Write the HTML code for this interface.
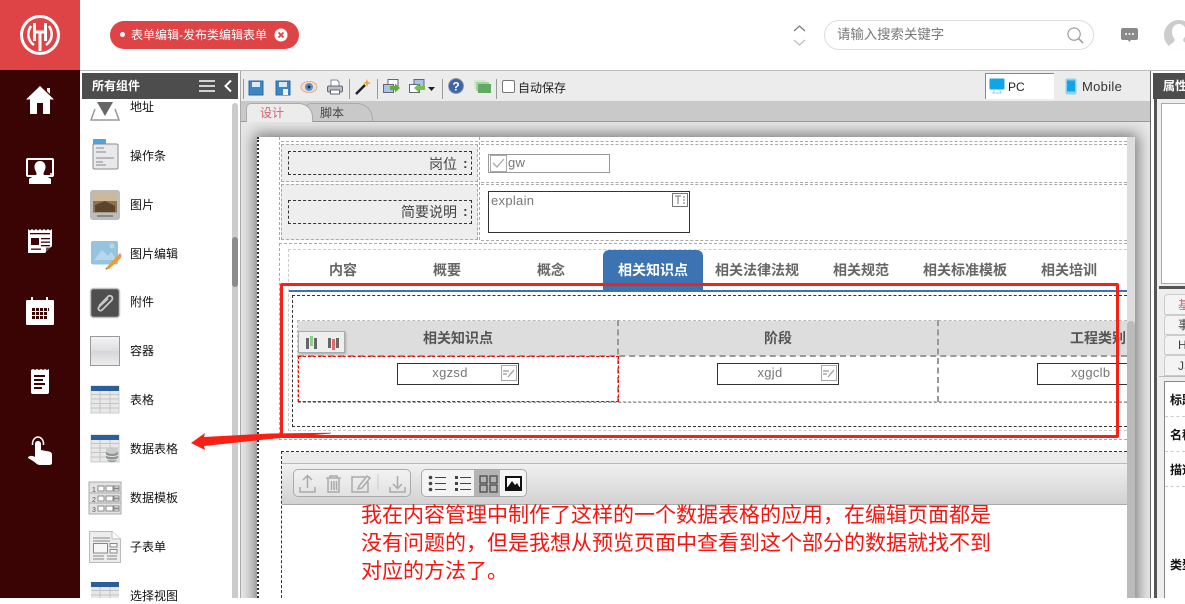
<!DOCTYPE html>
<html lang="zh"><head><meta charset="utf-8"><title>表单编辑</title>
<style>
*{box-sizing:border-box}
html,body{margin:0;padding:0}
body{width:1185px;height:598px;overflow:hidden;position:relative;background:#fff;font-family:"Liberation Sans","Noto Sans CJK SC",sans-serif;font-size:12px;color:#333}
.a{position:absolute}
.t{position:absolute;white-space:nowrap;line-height:16px}
svg{position:absolute;overflow:visible}
.item{position:absolute;left:130px;font-size:12px;color:#111;line-height:16px;white-space:nowrap}
.tab{position:absolute;top:262px;font-size:14px;font-weight:bold;color:#666;line-height:16px;white-space:nowrap}
.dash{position:absolute;border:1px dashed #aaa}
.dk{position:absolute;border:1px dashed #333}
.ctl{position:absolute;height:22px;border:1px solid #333;background:#fff;color:#777;text-align:center;line-height:18px;font-size:13px;letter-spacing:.3px;padding-right:16px}
.th{position:absolute;top:330px;font-weight:bold;font-size:14px;color:#555;line-height:16px;white-space:nowrap}
</style></head><body>

<!-- top bar -->
<div class="a" style="left:0;top:0;width:80px;height:70px;background:#de4446"></div>
<svg style="left:20px;top:15px" width="40" height="40" viewBox="0 0 40 40" fill="none" stroke="#fff">
<circle cx="20" cy="20" r="18.500" stroke-width="3"/>
<path d="M11 11C7 17 7 25 14 30M29 11C33 17 33 25 26 30" stroke-width="2.500"/>
<path d="M14.500 8V26M25.500 8V26M14.500 17H25.500M20 17V36" stroke-width="3"/>
</svg>
<div class="a" style="left:110px;top:21px;width:189px;height:28px;border-radius:14px;background:#de4446"></div>
<div class="a" style="left:120px;top:32px;width:5px;height:5px;border-radius:50%;background:#fff"></div>
<div class="t" style="left:131px;top:27px;color:#fff;font-size:12px">表单编辑-发布类编辑表单</div>
<svg style="left:274px;top:28px" width="14" height="14" viewBox="0 0 14 14"><circle cx="7" cy="7" r="6.500" fill="#fff"/><path d="M4.500 4.500L9.500 9.500M9.500 4.500L4.500 9.500" stroke="#de4446" stroke-width="1.800"/></svg>

<svg style="left:793px;top:24px" width="14" height="24" viewBox="0 0 14 24" fill="none"><path d="M1 7L6.500 2L12 7" stroke="#777" stroke-width="1.200"/><path d="M1 16L6.500 21L12 16" stroke="#bbb" stroke-width="1.200"/></svg>
<div class="a" style="left:824px;top:20px;width:270px;height:30px;border:1px solid #ddd;border-radius:15px;background:#fff"></div>
<div class="t" style="left:837px;top:27px;font-size:13.400px;color:#777">请输入搜索关键字</div>
<svg style="left:1067px;top:27px" width="17" height="17" viewBox="0 0 18 18" fill="none" stroke="#999"><circle cx="7.500" cy="7.500" r="6.500" stroke-width="1.200"/><path d="M12 12L17 17" stroke-width="1.600"/></svg>
<svg style="left:1121px;top:28px" width="17" height="15" viewBox="0 0 17 15"><path d="M2 0H15Q17 0 17 2V10Q17 12 15 12H10L8.500 14L7 12H2Q0 12 0 10V2Q0 0 2 0Z" fill="#8a8a8a"/><circle cx="5" cy="6" r="1" fill="#fff"/><circle cx="8.500" cy="6" r="1" fill="#fff"/><circle cx="12" cy="6" r="1" fill="#fff"/></svg>
<svg style="left:1164px;top:20px" width="21" height="30" viewBox="0 0 21 30"><circle cx="15" cy="15" r="15" fill="#ccc"/><path d="M15 4C10 4 8 8 8 12C8 16 10 18 11 20C10 23 6 24 5 26C8 29 12 30 15 30C18 30 22 29 25 26C24 24 20 23 19 20C20 18 22 16 22 12C22 8 20 4 15 4Z" fill="#fff"/></svg>
<div class="a" style="left:0;top:70px;width:1185px;height:1px;background:#bbb"></div>

<!-- left nav -->
<div class="a" style="left:0;top:70px;width:80px;height:528px;background:#3a0404"></div>
<svg style="left:25px;top:86px" width="30" height="29" viewBox="0 0 30 29" fill="#fff"><path d="M15 0L29 13.500H25V28H18V17H12V28H5V13.500H1Z"/><path d="M22 2H25V8L22 5Z"/></svg>
<svg style="left:26px;top:157px" width="28" height="28" viewBox="0 0 28 28"><path d="M2 1H26Q28 1 28 3V18Q28 20 26 20H2Q0 20 0 18V3Q0 1 2 1ZM2 3V18H26V3Z" fill="#fff" fill-rule="evenodd"/><path d="M14 4C10.500 4 8 7 8.500 11C9 13.500 10.500 15 10.500 17C10.500 19 5 20 3 22V27H25V22C23 20 17.500 19 17.500 17C17.500 15 19 13.500 19.500 11C20 7 17.500 4 14 4Z" fill="#fff"/><circle cx="25" cy="17" r="1" fill="#fff"/></svg>
<svg style="left:27px;top:228px" width="26" height="26" viewBox="0 0 26 26"><path d="M1 1L3 2.500L5 1L7 2.500L9 1L11 2.500L13 1L15 2.500L17 1L19 2.500L21 1L23 2.500L25 1V18L18 25H1Z" fill="#fff"/><g fill="#3a0404"><rect x="3" y="5" width="20" height="1.300"/><rect x="4" y="10" width="8" height="7"/><rect x="14" y="10" width="9" height="1.300"/><rect x="14" y="13.500" width="9" height="1.300"/><rect x="14" y="17" width="9" height="1.300"/><rect x="4" y="20.500" width="10" height="1.300"/></g><path d="M19 25V19.500H25Z" fill="#3a0404" opacity=".7"/></svg>
<svg style="left:26px;top:296px" width="28" height="29" viewBox="0 0 28 29"><path d="M1 4H5V1H7V4H20V1H22V4H27Q28 4 28 5V28Q28 29 27 29H1Q0 29 0 28V5Q0 4 1 4Z" fill="#fff"/><g fill="#3a0404"><rect x="6" y="12" width="3" height="3"/><rect x="10" y="12" width="3" height="3"/><rect x="14" y="12" width="3" height="3"/><rect x="18" y="12" width="3" height="3"/><rect x="22" y="12" width="1" height="3"/><rect x="6" y="16" width="3" height="3"/><rect x="10" y="16" width="3" height="3"/><rect x="14" y="16" width="3" height="3"/><rect x="18" y="16" width="3" height="3"/><rect x="6" y="20" width="3" height="3"/><rect x="10" y="20" width="3" height="3"/><rect x="14" y="20" width="3" height="3"/><rect x="18" y="20" width="3" height="3"/></g></svg>
<svg style="left:30px;top:368px" width="20" height="26" viewBox="0 0 20 26"><path d="M1 2L3 1L5 2L7 1L9 2L11 1L13 2L15 1L17 2L19 1V24Q19 26 17 26H3Q1 26 1 24Z" fill="#fff"/><g fill="#3a0404"><rect x="4" y="7" width="11" height="2"/><rect x="4" y="11" width="9" height="2"/><rect x="4" y="15" width="11" height="2"/><rect x="4" y="19" width="8" height="2"/></g></svg>
<svg style="left:27px;top:436px" width="26" height="30" viewBox="0 0 26 30"><path d="M8 20V8C8 4 14 4 14 8V14L22 15.500C24 16 25 17 25 19V27Q25 29 22 29H13C10 29 9 27 6 25L1 22C1 20 5 19 8 21Z" fill="#fff"/><path d="M5.500 9C5 3 9 1 11 1C13 1 17 3 16.500 9" fill="none" stroke="#fff" stroke-width="1.500"/></svg>

<!-- component panel -->
<div class="a" style="left:80px;top:71px;width:160px;height:527px;background:#fff"></div>
<div class="a" style="left:232px;top:103px;width:6px;height:495px;background:#ccc;border-radius:3px 3px 0 0"></div>
<div class="a" style="left:232px;top:237px;width:6px;height:50px;background:#8c8c8c;border-radius:3px"></div>
<div class="a" style="left:240px;top:71px;width:1px;height:527px;background:#aaa"></div>

<svg style="left:90px;top:101px" width="30" height="20" viewBox="0 0 30 20"><path d="M5 8L1 19H29L25 8" fill="none" stroke="#999" stroke-width="1.500"/><path d="M7 1H23L15 15Z" fill="#666"/></svg>
<div class="a" style="left:82px;top:73px;width:156px;height:26px;background:#4d4d4d"></div>
<div class="t" style="left:92px;top:78px;color:#fff;font-weight:bold;font-size:12px">所有组件</div>
<svg style="left:199px;top:80px" width="34" height="12" viewBox="0 0 34 12" fill="none" stroke="#fff"><path d="M0 1H16M0 6H16M0 11H16" stroke-width="1.400"/><path d="M32 0.500L26.500 6L32 11.500" stroke-width="2"/></svg>
<div class="item" style="top:99px">地址</div>

<svg style="left:91px;top:139px" width="27" height="31" viewBox="0 0 27 31"><rect x="2" y="0" width="13" height="7" fill="#4ea3e0" rx="1"/><rect x="2" y="5" width="25" height="25" rx="1.500" fill="#e9e9ec" stroke="#8a8a90"/><path d="M5 9H13M5 13H15M5 19H23M5 23H12M5 26H15" stroke="#888"/></svg>
<div class="item" style="left:130px;top:148px">操作条</div>

<svg style="left:90px;top:190px" width="30" height="30" viewBox="0 0 30 30"><rect width="30" height="30" rx="3" fill="#bcbcbc"/><rect x="3" y="2.500" width="24" height="20" fill="#8d7451"/><path d="M3 2.500H27V11H3Z" fill="#cdb99a"/><path d="M5 15L15 11L25 16V22H5Z" fill="#5b4429"/><path d="M7 26H23" stroke="#777" stroke-width="1.500"/></svg>
<div class="item" style="top:197px">图片</div>

<svg style="left:91px;top:241px" width="30" height="29" viewBox="0 0 30 29"><rect width="27" height="23.500" rx="2" fill="#95c4df"/><path d="M3 19L11 9L17 15L20 11L26 19Z" fill="#b7d7ea"/><circle cx="21" cy="5" r="2.500" fill="#b7d7ea"/><path d="M15 27L27 14L30 17L18 28Z" fill="#f79a1c"/><path d="M27 14L29 12L30.500 14L30 17Z" fill="#ee8c8c"/><path d="M15 27L14.500 28.500L17 28Z" fill="#444"/></svg>
<div class="item" style="top:246px">图片编辑</div>

<svg style="left:90px;top:288px" width="30" height="30" viewBox="0 0 30 30"><rect x=".5" y=".5" width="29" height="29" rx="3" fill="#4f4f4f" stroke="#c4c4c4" stroke-width="1.500"/><path d="M9 18L18 8.500C21 6 24 10 21.500 12.500L12 22C10 24 7 21 9 19L18 10.500" fill="none" stroke="#c9c9c9" stroke-width="1.800"/></svg>
<div class="item" style="top:294px">附件</div>

<div class="a" style="left:90px;top:336px;width:30px;height:30px;border:1px solid #999;background:linear-gradient(#f4f4f6 0,#dedee2 50%,#d6d6da 51%,#ececee 100%)"></div>
<div class="item" style="top:343px">容器</div>

<svg style="left:91px;top:386px" width="28" height="28" viewBox="0 0 28 28"><rect width="28" height="27" fill="#e8e8e8" stroke="#ccc"/><rect width="28" height="5" fill="#2b5e9b"/><path d="M0 8.500H28M0 13H28M0 17.500H28M0 22H28M9 5V27M19 5V27" stroke="#c4c4c4"/></svg>
<div class="item" style="top:392px">表格</div>

<svg style="left:91px;top:435px" width="28" height="28" viewBox="0 0 28 28"><rect width="28" height="27" fill="#e8e8e8" stroke="#ccc"/><rect width="28" height="5" fill="#2b5e9b"/><path d="M0 8.500H28M0 13H28M0 17.500H28M0 22H28M9 5V27M19 5V27" stroke="#c4c4c4"/><rect x="15" y="13" width="12" height="14" rx="5" fill="#8f9294"/><ellipse cx="21" cy="15.500" rx="6" ry="3.500" fill="#c9cccd"/><path d="M15 20C17 22 25 22 27 20M15 23.500C17 25.500 25 25.500 27 23.500" stroke="#e5e5e5" fill="none"/></svg>
<div class="item" style="top:441px">数据表格</div>

<svg style="left:89px;top:482px" width="32" height="32" viewBox="0 0 32 32"><rect width="32" height="32" fill="#e2e2e2" stroke="#aaa"/><path d="M0 11H32M0 21H32" stroke="#aaa"/><g fill="#fff" stroke="#888"><rect x="9" y="4" width="6" height="5"/><rect x="17" y="4" width="7" height="5"/><rect x="9" y="14" width="6" height="5"/><rect x="17" y="14" width="7" height="5"/><rect x="9" y="24" width="6" height="5"/><rect x="17" y="24" width="7" height="5"/><rect x="25" y="4" width="5" height="2"/><rect x="25" y="7" width="5" height="2"/><rect x="25" y="14" width="5" height="2"/><rect x="25" y="17" width="5" height="2"/><rect x="25" y="24" width="5" height="2"/><rect x="25" y="27" width="5" height="2"/></g><text x="3" y="10" font-size="7" fill="#555" font-family="Liberation Sans">1</text><text x="3" y="20" font-size="7" fill="#555" font-family="Liberation Sans">2</text><text x="3" y="30" font-size="7" fill="#555" font-family="Liberation Sans">3</text></svg>
<div class="item" style="top:490px">数据模板</div>

<svg style="left:89px;top:531px" width="32" height="32" viewBox="0 0 32 32"><path d="M.5 .5H23L31.500 8V31.500H.5Z" fill="#ededed" stroke="#bbb"/><path d="M23 .5V8H31.500" fill="#fff" stroke="#bbb"/><path d="M4 7H21M4 10H21M4 25H15M18 25H28M4 28H15M18 28H28" stroke="#888"/><rect x="4.500" y="12.500" width="14" height="9.500" fill="#f7f7f7" stroke="#888"/><rect x="21" y="12.500" width="7" height="3.500" fill="#f7f7f7" stroke="#888"/><rect x="21" y="18.500" width="7" height="3.500" fill="#f7f7f7" stroke="#888"/></svg>
<div class="item" style="top:539px">子表单</div>

<svg style="left:91px;top:582px" width="28" height="16" viewBox="0 0 28 16"><rect width="28" height="16" fill="#e8e8e8"/><rect width="28" height="5" fill="#2b5e9b"/><path d="M0 8.500H28M0 13H28M9 5V16M19 5V16" stroke="#c4c4c4"/></svg>
<div class="item" style="top:588px">选择视图</div>

<!-- main toolbar -->
<div class="a" style="left:241px;top:71px;width:909px;height:30px;background:#ececec"></div>
<div class="a" style="left:241px;top:101px;width:909px;height:20px;background:#c9c9c9"></div>
<div class="a" style="left:241px;top:121px;width:909px;height:1px;background:#999"></div>
<div class="a" style="left:241px;top:122px;width:909px;height:476px;background:#e8e8e8;overflow:hidden"><div class="a" style="left:16px;top:15px;width:878px;height:470px;background:#ccc;box-shadow:0 0 14px 3px #777"></div></div>

<div class="a" style="left:243px;top:79px;width:1px;height:20px;background:#999"></div>
<svg style="left:249px;top:81px" width="14" height="14" viewBox="0 0 14 14"><rect width="14" height="14" fill="#3f86c6" stroke="#2e6a9f"/><rect x="3" y="1" width="8" height="5" fill="#dbe9f5"/></svg>
<svg style="left:276px;top:81px" width="14" height="14" viewBox="0 0 14 14"><rect width="14" height="14" fill="#3f86c6" stroke="#2e6a9f"/><rect x="3" y="1" width="8" height="5" fill="#dbe9f5"/><rect x="7" y="8" width="5" height="6" fill="#f4f4f4"/></svg>
<svg style="left:301px;top:81px" width="16" height="12" viewBox="0 0 16 12"><ellipse cx="8" cy="6" rx="8" ry="5.500" fill="#f5ddc9" stroke="#d3a788" stroke-width=".8"/><circle cx="8" cy="6" r="4" fill="#5c90c8"/><circle cx="8" cy="6" r="1.500" fill="#234"/></svg>
<svg style="left:327px;top:79px" width="16" height="16" viewBox="0 0 16 16"><path d="M4 1H10L12 3V8H4Z" fill="#fff" stroke="#7a8aa0"/><rect x=".5" y="7" width="15" height="6" rx="1.500" fill="#b8bec8" stroke="#667"/><rect x="3.500" y="11" width="9" height="4" fill="#fff" stroke="#667"/></svg>
<div class="a" style="left:349px;top:79px;width:1px;height:20px;background:#999"></div>
<svg style="left:355px;top:79px" width="16" height="16" viewBox="0 0 16 16"><path d="M1 15L10 6" stroke="#222" stroke-width="2.500"/><path d="M12 0L13 3L16 4L13 5L12 8L11 5L8 4L11 3Z" fill="#e9a91d"/></svg>
<div class="a" style="left:377px;top:79px;width:1px;height:20px;background:#999"></div>
<svg style="left:383px;top:79px" width="17" height="16" viewBox="0 0 17 16"><rect x="5" y=".5" width="10" height="8" fill="#fff" stroke="#667"/><rect x=".5" y="5.500" width="10" height="8" fill="#a8c4e8" stroke="#667"/><path d="M7 7H12V4.500L17 9L12 13.500V11H7Z" fill="#5eab3b"/></svg>
<svg style="left:409px;top:79px" width="17" height="16" viewBox="0 0 17 16"><rect x="5" y=".5" width="10" height="8" fill="#a8c4e8" stroke="#667"/><rect x=".5" y="5.500" width="10" height="8" fill="#fff" stroke="#667"/><path d="M16 7H10V4.500L5 9L10 13.500V11H16Z" fill="#7bc04f"/></svg>
<svg style="left:428px;top:87px" width="7" height="4" viewBox="0 0 7 4"><path d="M0 0H7L3.500 4Z" fill="#222"/></svg>
<div class="a" style="left:442px;top:79px;width:1px;height:20px;background:#999"></div>
<svg style="left:448px;top:78px" width="16" height="16" viewBox="0 0 16 16"><circle cx="8" cy="8" r="7.500" fill="#3c65a8" stroke="#99a"/><text x="8" y="12.500" text-anchor="middle" font-size="12" font-weight="bold" fill="#fff" font-family="Liberation Sans">?</text></svg>
<svg style="left:474px;top:80px" width="17" height="14" viewBox="0 0 17 14"><rect x="0" y="0" width="12" height="9" fill="#d2e8d2"/><rect x="2" y="2" width="13" height="9" fill="#a6d3a6"/><rect x="4" y="4" width="13" height="9" fill="#63a963"/></svg>
<div class="a" style="left:496px;top:79px;width:1px;height:20px;background:#999"></div>
<div class="a" style="left:502px;top:80px;width:13px;height:13px;border:1px solid #777;border-radius:2px;background:#fff"></div>
<div class="t" style="left:518px;top:80px;color:#222;font-size:12px">自动保存</div>

<div class="a" style="left:985px;top:73px;width:69px;height:26px;background:#fff;border-left:1px solid #888;border-top:1px solid #888"></div>
<svg style="left:989px;top:78px" width="16" height="16" viewBox="0 0 16 16"><rect x=".5" y=".5" width="15" height="11" rx="1.500" fill="#0ea5e9" stroke="#8fd0ee"/><path d="M4 15H12L10.500 11.500H5.500Z" fill="#fff" stroke="#8fd0ee"/></svg>
<div class="t" style="left:1008px;top:79px;color:#222">PC</div>
<svg style="left:1065px;top:78px" width="12" height="17" viewBox="0 0 12 17"><rect x=".5" y=".5" width="11" height="16" rx="2" fill="#8fd0ee"/><rect x="2" y="2.500" width="8" height="11" fill="#0ea5e9"/></svg>
<div class="t" style="left:1082px;top:79px;color:#333;font-size:13px;letter-spacing:.3px">Mobile</div>

<div class="a" style="left:306px;top:103px;width:67px;height:18px;background:#c9c9c9;border:1px solid #aaa;border-bottom:0;border-radius:5px 16px 0 0"></div>
<div class="a" style="left:246px;top:103px;width:67px;height:19px;background:#ececec;border:1px solid #aaa;border-bottom:0;border-radius:5px 14px 0 0"></div>
<div class="t" style="left:260px;top:105px;color:#c9686f">设计</div>
<div class="t" style="left:320px;top:105px;color:#444">脚本</div>

<!-- canvas -->
<div class="a" style="left:257px;top:137px;width:870px;height:461px;background:#fff;border-left:2px dotted #333"></div>
<div class="a" style="left:1127px;top:137px;width:8px;height:461px;background:#ddd"></div>
<div class="a" style="left:1127px;top:321px;width:8px;height:277px;background:#bbb;border-radius:4px 4px 0 0"></div>

<!-- form rows -->
<div class="a" style="left:279px;top:137px;width:0;height:103px;border-left:1px dashed #aaa"></div>
<div class="a" style="left:281px;top:144px;width:197px;height:38px;background:#eee;border:1px dashed #aaa"></div>
<div class="a" style="left:281px;top:184px;width:197px;height:56px;background:#eee;border:1px dashed #aaa"></div>
<div class="a" style="left:479px;top:137px;width:0;height:103px;border-left:1px dashed #aaa"></div>
<div class="a" style="left:481px;top:141px;width:646px;height:0;border-top:1px dashed #aaa"></div>
<div class="a" style="left:281px;top:141px;width:197px;height:0;border-top:1px dashed #aaa"></div>
<div class="a" style="left:481px;top:144px;width:646px;height:0;border-top:1px dashed #aaa"></div>
<div class="a" style="left:481px;top:182px;width:646px;height:0;border-top:1px dashed #aaa"></div>
<div class="a" style="left:481px;top:184px;width:646px;height:0;border-top:1px dashed #aaa"></div>
<div class="a" style="left:481px;top:240px;width:646px;height:0;border-top:1px dashed #aaa"></div>
<div class="dk" style="left:288px;top:151px;width:184px;height:24px"></div>
<div class="dk" style="left:288px;top:200px;width:184px;height:24px"></div>
<div class="t" style="left:429px;top:156px;font-size:14px;color:#444">岗位</div>
<div class="t" style="left:463px;top:155px;font-size:14px;font-weight:bold;color:#444">:</div>
<div class="t" style="left:401px;top:204px;font-size:14px;color:#444">简要说明</div>
<div class="t" style="left:463px;top:203px;font-size:14px;font-weight:bold;color:#444">:</div>
<div class="a" style="left:488px;top:154px;width:122px;height:19px;border:1px solid #999;background:#fff"></div>
<svg style="left:490px;top:155px" width="17" height="17" viewBox="0 0 17 17"><rect x=".5" y=".5" width="16" height="16" fill="#fff" stroke="#aaa"/><path d="M3 8L7 12L14 4" fill="none" stroke="#aaa" stroke-width="1.300"/></svg>
<div class="t" style="left:508px;top:155px;color:#777;font-size:13px;letter-spacing:.3px">gw</div>
<div class="a" style="left:488px;top:191px;width:202px;height:42px;border:1px solid #333;background:#fff"></div>
<div class="t" style="left:491px;top:193px;color:#777;font-size:13px;letter-spacing:.3px">explain</div>
<svg style="left:672px;top:193px" width="16" height="14" viewBox="0 0 16 14" fill="none" stroke="#777"><rect x=".5" y=".5" width="15" height="13"/><path d="M3 3H9M6 3V11M11 4H13M11 7H13M11 10H13"/></svg>

<!-- tabs -->
<div class="dash" style="left:279px;top:243px;width:848px;height:197px;border-right:0"></div>
<div class="dash" style="left:288px;top:249px;width:839px;height:182px;border-color:#ccc;border-right:0"></div>
<div class="tab" style="left:329px">内容</div>
<div class="tab" style="left:433px">概要</div>
<div class="tab" style="left:537px">概念</div>
<div class="a" style="left:603px;top:250px;width:100px;height:41px;background:#3b73b3;border-radius:6px 6px 0 0"></div>
<div class="tab" style="left:618px;color:#fff">相关知识点</div>
<div class="tab" style="left:715px">相关法律法规</div>
<div class="tab" style="left:833px">相关规范</div>
<div class="tab" style="left:923px">相关标准模板</div>
<div class="tab" style="left:1041px">相关培训</div>
<div class="a" style="left:289px;top:290px;width:838px;height:2px;background:#3b73b3"></div>
<div class="dk" style="left:292px;top:295px;width:835px;height:132px;border-right:0"></div>

<!-- table -->
<div class="a" style="left:297px;top:320px;width:830px;height:82px;border:1px dashed #bbb;border-right:0"></div>
<div class="a" style="left:298px;top:321px;width:829px;height:35px;background:#ddd"></div>
<div class="a" style="left:298px;top:355px;width:829px;height:0;border-top:2px dashed #999"></div>
<div class="a" style="left:617px;top:320px;height:82px;width:0;border-left:2px dashed #999"></div>
<div class="a" style="left:937px;top:320px;height:82px;width:0;border-left:2px dashed #999"></div>
<div class="a" style="left:298px;top:402px;width:829px;height:0;border-top:1px dashed #999"></div>
<div class="a" style="left:298px;top:356px;width:321px;height:46px;border:1px dashed #e00"></div>
<div class="th" style="left:423px">相关知识点</div>
<div class="th" style="left:764px">阶段</div>
<div class="th" style="left:1070px">工程类别</div>
<div class="a" style="left:298px;top:331px;width:47px;height:22px;background:#eee;border:1px solid #aaa;box-shadow:1px 1px 2px #aaa"></div>
<svg style="left:305px;top:336px" width="36" height="14" viewBox="0 0 36 14"><rect x="1" y="2" width="3" height="11" fill="#666"/><rect x="5" y="0" width="3" height="10" fill="#8ed08a"/><rect x="9" y="2" width="3" height="11" fill="#666"/><rect x="23" y="2" width="3" height="10" fill="#666"/><rect x="27" y="3" width="3" height="11" fill="#e26a6a"/><rect x="31" y="2" width="3" height="10" fill="#666"/></svg>
<div class="ctl" style="left:397px;top:363px;width:122px">xgzsd</div>
<div class="ctl" style="left:717px;top:363px;width:122px">xgjd</div>
<div class="ctl" style="left:1037px;top:363px;width:90px;border-right:0;padding-right:0;padding-left:33px;text-align:left">xggclb</div>
<svg style="left:501px;top:365px" width="16" height="16" viewBox="0 0 16 16" fill="none" stroke="#aaa"><rect x=".5" y=".5" width="15" height="15"/><path d="M2 6H8M2 9H6M7 12L13 5" stroke="#999" stroke-width="1.200"/></svg>
<svg style="left:821px;top:365px" width="16" height="16" viewBox="0 0 16 16" fill="none" stroke="#aaa"><rect x=".5" y=".5" width="15" height="15"/><path d="M2 6H8M2 9H6M7 12L13 5" stroke="#999" stroke-width="1.200"/></svg>

<!-- red box + arrow -->
<div class="a" style="left:280px;top:283px;width:839px;height:155px;border:3px solid #f91f14;border-radius:2px"></div>
<svg style="left:190px;top:430px" width="145" height="24" viewBox="0 0 145 24"><path d="M1 13L15 3L14 7L80 3.500L141 2.800V3.500L80 9L14 16L15 20Z" fill="#f91f14"/></svg>

<!-- lower section -->
<div class="a" style="left:281px;top:451px;width:846px;height:147px;border:1px dashed #333;border-right:0;border-bottom:0"></div>
<div class="a" style="left:282px;top:452px;width:845px;height:11px;background:#ececec"></div>
<div class="a" style="left:282px;top:463px;width:845px;height:42px;background:linear-gradient(#f0f0f0,#d2d2d2);border-top:1px solid #bbb;border-bottom:1px solid #aaa"></div>
<div class="a" style="left:293px;top:469px;width:118px;height:28px;border:1px solid #aaa;border-radius:5px;background:linear-gradient(#f2f2f2,#e2e2e2)"></div>
<svg style="left:299px;top:474px" width="106" height="19" viewBox="0 0 106 19" fill="none" stroke="#aaa" stroke-width="1.500"><path d="M1 13V18H16V13M8.500 14V2M4 6L8.500 1.500L13 6"/><path d="M27 4H42M31 4V2H38V4M29 5V18H40V5M32.500 7V16M35 7V16M37.500 7V16"/><path d="M66 3H53V18H69V8M60 12L68 2L71 4L63 14L59 15Z"/><path d="M79 0V16" stroke="#ccc" stroke-width="1"/><path d="M91 13V18H106V13M98.500 2V14M94 10L98.500 14.500L103 10"/></svg>
<div class="a" style="left:421px;top:469px;width:106px;height:28px;border:1px solid #aaa;border-radius:5px;background:#f4f4f4;overflow:hidden"><div class="a" style="left:52px;top:0;width:26px;height:28px;background:#b4b4b4"></div></div>
<svg style="left:428px;top:475px" width="95" height="18" viewBox="0 0 95 18"><g fill="#444"><circle cx="2.500" cy="2.500" r="1.800"/><circle cx="2.500" cy="8.500" r="1.800"/><circle cx="2.500" cy="14.500" r="1.800"/><rect x="7" y="2" width="11" height="1"/><rect x="7" y="8" width="11" height="1"/><rect x="7" y="14" width="11" height="1"/><rect x="27" y="1" width="3" height="3"/><rect x="27" y="7" width="3" height="3"/><rect x="27" y="13" width="3" height="3"/><rect x="32" y="2" width="11" height="1"/><rect x="32" y="8" width="11" height="1"/><rect x="32" y="14" width="11" height="1"/></g><g fill="none" stroke="#444" stroke-width="1.200"><rect x="52" y="1" width="7" height="7"/><rect x="62" y="1" width="7" height="7"/><rect x="52" y="10" width="7" height="7"/><rect x="62" y="10" width="7" height="7"/></g><rect x="77" y="1" width="17" height="15" fill="#111"/><rect x="79" y="3" width="13" height="9" fill="#fff"/><path d="M79 13L84 6L87 10L89 8L92 13Z" fill="#111"/></svg>

<!-- annotation -->
<div class="a" style="left:361px;top:500px;width:640px;font-size:21px;line-height:28px;color:#f8140e;white-space:nowrap;font-family:'WenQuanYi Zen Hei','Noto Sans CJK SC',sans-serif">我在内容管理中制作了这样的一个数据表格的应用，在编辑页面都是<br>没有问题的，但是我想从预览页面中查看到这个部分的数据就找不到<br>对应的方法了。</div>

<!-- right panel -->
<div class="a" style="left:1150px;top:71px;width:1px;height:527px;background:#666"></div>
<div class="a" style="left:1151px;top:71px;width:34px;height:527px;background:#fff"></div>
<div class="a" style="left:1153px;top:73px;width:32px;height:26px;background:#4d4d4d"></div>
<div class="t" style="left:1163px;top:78px;color:#fff;font-weight:bold;font-size:12px">属性</div>
<div class="a" style="left:1154px;top:99px;width:3px;height:499px;background:#555"></div>
<div class="a" style="left:1157px;top:99px;width:28px;height:499px;background:#eee"></div>
<div class="a" style="left:1161px;top:103px;width:24px;height:181px;background:#fff;border:1px solid #aaa;border-right:0"></div>
<div class="a" style="left:1159px;top:286px;width:26px;height:3px;background:#555"></div>
<div class="a" style="left:1164px;top:294px;width:21px;height:21px;background:#f4f4f4;border:1px solid #ccc;border-right:0;border-radius:4px 0 0 0"></div>
<div class="a" style="left:1164px;top:315px;width:21px;height:20px;background:#f4f4f4;border:1px solid #ccc;border-right:0;border-radius:4px 0 0 0"></div>
<div class="a" style="left:1164px;top:335px;width:21px;height:20px;background:#f4f4f4;border:1px solid #ccc;border-right:0;border-radius:4px 0 0 0"></div>
<div class="a" style="left:1164px;top:355px;width:21px;height:21px;background:#f4f4f4;border:1px solid #ccc;border-right:0;border-radius:4px 0 0 0"></div>
<div class="t" style="left:1178px;top:297px;color:#c9686f">基</div>
<div class="t" style="left:1178px;top:317px;color:#444">事</div>
<div class="t" style="left:1178px;top:337px;color:#444">H</div>
<div class="t" style="left:1178px;top:358px;color:#444">JS</div>
<div class="a" style="left:1159px;top:376px;width:26px;height:5px;background:#eee;border-top:1px solid #bbb"></div>
<div class="a" style="left:1164px;top:381px;width:21px;height:217px;background:#fff;border-left:1px solid #888;border-top:1px solid #888"></div>
<div class="t" style="left:1170px;top:392px;color:#111;font-weight:bold">标题</div>
<div class="t" style="left:1170px;top:427px;color:#111;font-weight:bold">名称</div>
<div class="t" style="left:1170px;top:462px;color:#111;font-weight:bold">描述</div>
<div class="t" style="left:1170px;top:557px;color:#111;font-weight:bold">类型</div>
<div class="a" style="left:1165px;top:416px;width:20px;border-top:1px dashed #ccc"></div>
<div class="a" style="left:1165px;top:451px;width:20px;border-top:1px dashed #ccc"></div>
<div class="a" style="left:1165px;top:486px;width:20px;border-top:1px dashed #ccc"></div>
</body></html>
